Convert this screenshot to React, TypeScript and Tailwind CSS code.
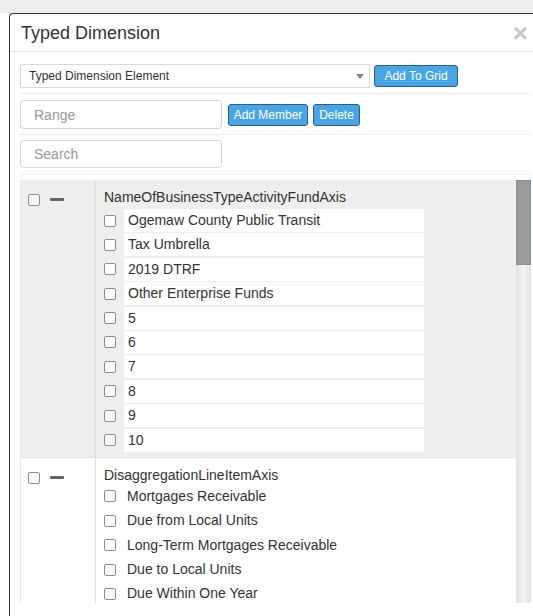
import React from "react";

type Group = {
  axis: string;
  members: string[];
  shaded?: boolean;
};

const groups: Group[] = [
  {
    axis: "NameOfBusinessTypeActivityFundAxis",
    shaded: true,
    members: [
      "Ogemaw County Public Transit",
      "Tax Umbrella",
      "2019 DTRF",
      "Other Enterprise Funds",
      "5",
      "6",
      "7",
      "8",
      "9",
      "10",
    ],
  },
  {
    axis: "DisaggregationLineItemAxis",
    members: [
      "Mortgages Receivable",
      "Due from Local Units",
      "Long-Term Mortgages Receivable",
      "Due to Local Units",
      "Due Within One Year",
    ],
  },
];

const Box = () => (
  <span className="inline-block w-[12px] h-[12px] shrink-0 rounded-[2px] border border-[#8c8c8c] bg-white" />
);

const Btn = ({ label, w }: { label: string; w: string }) => (
  <button
    className={`${w} h-[22px] rounded-[3px] border border-[#2b5f8a] bg-[#4ba5e4] text-white text-[12px] leading-none`}
  >
    {label}
  </button>
);

const GroupRow = ({ group }: { group: Group }) => (
  <div
    className={`flex border-b border-[#e2e2e2] ${
      group.shaded ? "bg-[#eeeeee]" : "bg-white"
    }`}
  >
    <div className="w-[75px] shrink-0 border-r border-[#dedede] pl-[7px] pt-[14px] flex items-start gap-[10px]">
      <Box />
      <span className="mt-[4px] w-[14px] h-[3px] rounded-[1px] bg-[#666]" />
    </div>
    <div className="pl-[8px] pt-[8px] pb-[4px]">
      <div className="h-[18px] leading-[18px] text-[14px] text-[#333]">
        {group.axis}
      </div>
      <div className={group.shaded ? "mt-[3px]" : "mt-[1px]"}>
        {group.members.map((m) => (
          <div key={m} className="h-[24.4px] flex items-start">
            <div className="h-[23px] flex items-center">
              <Box />
            </div>
            <div
              className={`ml-[8px] h-[23px] flex items-center text-[14px] text-[#333] ${
                group.shaded ? "w-[300px] bg-white pl-[4px]" : "pl-[3px]"
              }`}
            >
              {m}
            </div>
          </div>
        ))}
      </div>
    </div>
  </div>
);

export default function App() {
  return (
    <div
      className="w-[533px] h-[616px] overflow-hidden bg-white flex flex-col"
      style={{ fontFamily: '"Liberation Sans", Arial, sans-serif' }}
    >
      <div className="h-[13px] shrink-0 bg-[#ebedef]" />
      <div className="flex-1 ml-[9px] border-l border-t border-[#333] rounded-tl-[4px] bg-white flex flex-col min-h-0">
        {/* header */}
        <div className="h-[38px] shrink-0 flex items-center pl-[11px] pr-[5px] border-b border-[#e5e5e5]">
          <h4 className="text-[18px] text-[#333] mt-[1px]">Typed Dimension</h4>
          <span className="ml-auto text-[26px] leading-none font-bold text-[#c6c6c6]">
            ×
          </span>
        </div>

        {/* body */}
        <div className="flex-1 min-h-0 pl-[10px] pr-[2px] pt-[12px] pb-[13px] flex flex-col">
          <div className="shrink-0 flex items-center gap-[4px] h-[24px]">
            <div className="w-[350px] h-[24px] border border-[#d8d8d8] rounded-[2px] flex items-center pl-[8px] pr-[5px] text-[12px] text-[#333]">
              Typed Dimension Element
              <span className="ml-auto w-0 h-0 border-l-[4px] border-r-[4px] border-t-[5px] border-l-transparent border-r-transparent border-t-[#888]" />
            </div>
            <Btn label="Add To Grid" w="w-[84px]" />
          </div>
          <div className="shrink-0 mt-[5px] border-t border-[#eeeeee]" />

          <div className="shrink-0 mt-[6px] flex items-center h-[29px]">
            <input
              placeholder="Range"
              className="w-[202px] h-[29px] border border-[#d4d4d4] rounded-[4px] pl-[13px] text-[14px] placeholder:text-[#999] outline-none"
            />
            <div className="ml-[6px] flex gap-[5px]">
              <Btn label="Add Member" w="w-[80px]" />
              <Btn label="Delete" w="w-[47px]" />
            </div>
          </div>
          <div className="shrink-0 mt-[5px] border-t border-[#eeeeee]" />

          <input
            placeholder="Search"
            className="shrink-0 mt-[5px] w-[202px] h-[28px] border border-[#d4d4d4] rounded-[4px] pl-[13px] text-[14px] placeholder:text-[#999] outline-none"
          />
          <div className="shrink-0 mt-[6px] border-t border-[#eeeeee]" />

          {/* member list with its scrollbar */}
          <div className="mt-[5px] flex-1 min-h-0 flex">
            <div className="flex-1 overflow-hidden border-l border-[#e8e8e8]">
              {groups.map((g) => (
                <GroupRow key={g.axis} group={g} />
              ))}
            </div>
            <div className="w-[15px] shrink-0 flex flex-col bg-gradient-to-r from-[#e2e2e2] via-[#f4f4f4] to-[#e2e2e2]">
              <div className="h-[85px] bg-[#9a9a9a] border border-[#7e90a2]" />
            </div>
          </div>
        </div>
      </div>
    </div>
  );
}
